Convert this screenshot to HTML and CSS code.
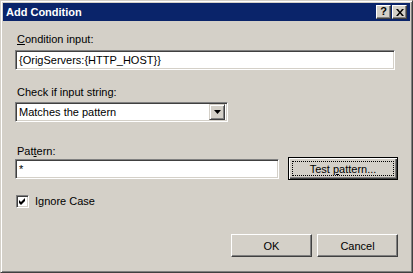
FILE: index.html
```html
<!DOCTYPE html>
<html>
<head>
<meta charset="utf-8">
<link rel="stylesheet" href="styles.css">
</head>
<body>
<div class="window">
  <div class="titlebar">
    <span class="title">Add Condition</span>
    <div class="tbtns">
      <span class="tbtn help">?</span>
      <span class="tbtn close"><svg width="8" height="7" viewBox="0 0 8 7"><path d="M0 0h2l2 2.5L6 0h2L5 3.5 8 7H6L4 4.5 2 7H0l3-3.5z" fill="#000"/></svg></span>
    </div>
  </div>
  <div class="content">
    <div class="lbl l1"><u>C</u>ondition input:</div>
    <div class="textbox tb1">{OrigServers:{HTTP_HOST}}</div>
    <div class="lbl l2">Check if input string:</div>
    <div class="select">
      <span class="seltext">Matches the pattern</span>
      <span class="dropbtn"><svg width="7" height="4" viewBox="0 0 7 4"><path d="M0 0h7L3.5 4z" fill="#000"/></svg></span>
    </div>
    <div class="lbl l3">Pat<u>t</u>ern:</div>
    <div class="row">
      <div class="textbox tb3">*</div>
      <button class="btn default">Test <u>p</u>attern...</button>
    </div>
    <div class="check">
      <span class="cb"><svg width="7" height="7" viewBox="0 0 7 7"><path d="M0 2l2 2 4-4v3L2 7 0 5z" fill="#000"/></svg></span>
      <span class="cblabel">Ignore Case</span>
    </div>
    <div class="footer">
      <button class="btn">OK</button>
      <button class="btn">Cancel</button>
    </div>
  </div>
</div>
</body>
</html>
```
FILE: styles.css
```css
* { box-sizing: border-box; }
html, body { margin: 0; padding: 0; }
body {
  font-family: Tahoma, "Liberation Sans", Arial, sans-serif;
  font-size: 11px;
  color: #000;
  background: #d4d0c8;
}
.window {
  width: 413px;
  height: 273px;
  background: #d4d0c8;
  border: 1px solid;
  border-color: #d4d0c8 #404040 #404040 #d4d0c8;
  box-shadow: inset 1px 1px #fff, inset -1px -1px #808080;
  padding: 2px;
  display: flex;
  flex-direction: column;
}
.titlebar {
  height: 18px;
  background: #0a246a;
  display: flex;
  align-items: center;
  justify-content: space-between;
  padding: 0 3px 0 3px;
}
.title {
  color: #fff;
  font-weight: bold;
  font-size: 11px;
  line-height: 13px;
}
.tbtns {
  display: flex;
  gap: 1px;
}
.tbtn {
  width: 15px;
  height: 14px;
  background: #d4d0c8;
  border: 1px solid;
  border-color: #fff #404040 #404040 #fff;
  box-shadow: inset -1px -1px #808080;
  display: flex;
  align-items: center;
  justify-content: center;
  font-weight: bold;
  font-size: 11px;
  line-height: 11px;
}
.help { padding-bottom: 1px; }
.content {
  padding: 0 12px;
  display: flex;
  flex-direction: column;
  align-items: flex-start;
}
.lbl {
  line-height: 13px;
  height: 13px;
  padding-left: 2px;
}
.l1 { margin-top: 12px; }
.l2 { margin-top: 16px; }
.l3 { margin-top: 23px; }
.textbox {
  height: 20px;
  background: #fff;
  border: 1px solid;
  border-color: #808080 #fff #fff #808080;
  box-shadow: inset 1px 1px #404040, inset -1px -1px #d4d0c8;
  padding: 0 3px;
  line-height: 18px;
  white-space: nowrap;
}
.tb1 { width: 380px; margin-top: 4px; }
.select {
  margin-top: 3px;
  width: 213px;
  height: 20px;
  background: #fff;
  border: 1px solid;
  border-color: #808080 #fff #fff #808080;
  box-shadow: inset 1px 1px #404040, inset -1px -1px #d4d0c8;
  padding: 2px;
  display: flex;
  align-items: center;
}
.seltext {
  flex: 1;
  padding-left: 1px;
  line-height: 14px;
}
.dropbtn {
  width: 16px;
  height: 16px;
  background: #d4d0c8;
  border: 1px solid;
  border-color: #d4d0c8 #404040 #404040 #d4d0c8;
  box-shadow: inset 1px 1px #fff, inset -1px -1px #808080;
  display: flex;
  align-items: center;
  justify-content: center;
}
.row {
  width: 383px;
  margin-top: -1px;
  display: flex;
  align-items: flex-start;
  justify-content: space-between;
}
.tb3 { width: 264px; margin-top: 2px; }
.btn {
  font-family: inherit;
  font-size: 11px;
  color: #000;
  height: 23px;
  background: #d4d0c8;
  border: 1px solid;
  border-color: #fff #404040 #404040 #fff;
  box-shadow: inset -1px -1px #808080, inset 1px 1px #d4d0c8;
  padding: 0;
  position: relative;
}
.btn.default {
  width: 110px;
  border: 1px solid #000;
  box-shadow: inset 1px 1px #fff, inset -1px -1px #404040, inset -2px -2px #808080;
}
.btn.default::after {
  content: "";
  position: absolute;
  left: 3px; top: 3px; right: 3px; bottom: 3px;
  border: 1px dotted #000;
}
.check {
  margin-top: 15px;
  display: flex;
  align-items: center;
  padding-left: 1px;
}
.cb {
  width: 13px;
  height: 13px;
  background: #fff;
  border: 1px solid;
  border-color: #808080 #fff #fff #808080;
  box-shadow: inset 1px 1px #404040, inset -1px -1px #d4d0c8;
  display: flex;
  align-items: center;
  justify-content: center;
}
.cblabel {
  margin-left: 6px;
  line-height: 13px;
}
.footer {
  margin-top: 26px;
  width: 383px;
  display: flex;
  justify-content: flex-end;
  gap: 5px;
}
.footer .btn { width: 81px; }
```
